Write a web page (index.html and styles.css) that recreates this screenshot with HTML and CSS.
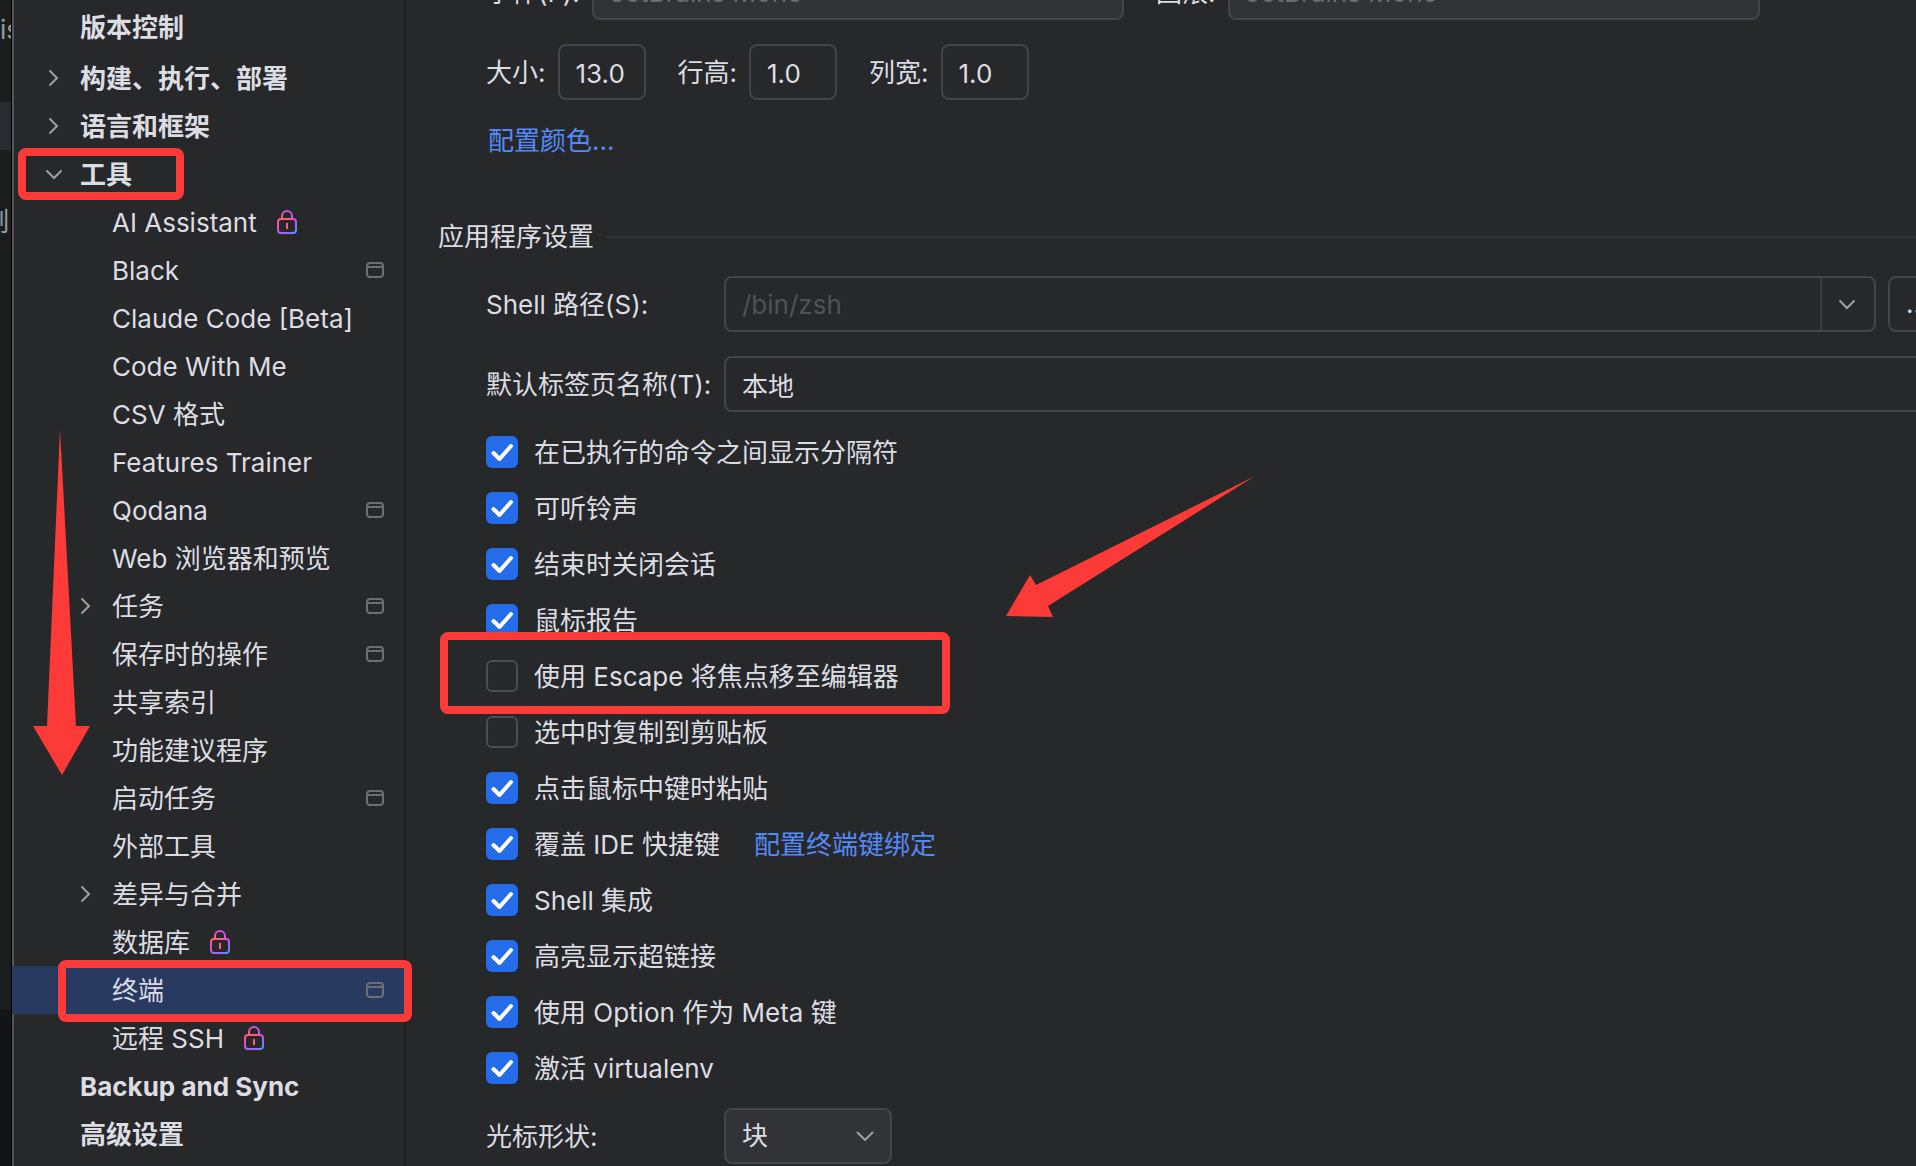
FILE: index.html
```html
<!DOCTYPE html>
<html lang="zh-CN">

	<head>
		<title>设置 - 终端</title>
		<meta charset="utf-8">
		<link rel="stylesheet" href="styles.css">
	</head>

	<body>
		<!-- icons -->
		<svg class="defs" width="0" height="0">
			<defs>
				<radialGradient id="lockFill" gradientUnits="userSpaceOnUse" cx="7" cy="11" r="15">
					<stop offset="0.3" stop-color="#ff5c7c"/>
					<stop offset="0.7" stop-color="#d74be8"/>
					<stop offset="1" stop-color="#5a8cff"/>
				</radialGradient>
			</defs>
			<symbol id="right" viewBox="0 0 24 24">
				<path d="M9.5 4.5L17 12L9.5 19.5" fill="none" stroke="#9da0a8" stroke-width="2"/>
			</symbol>
			<symbol id="down" viewBox="0 0 24 24">
				<path d="M6.5 8.5L14 16L21.5 8.5" fill="none" stroke="#9da0a8" stroke-width="2"/>
			</symbol>
			<symbol id="lock" viewBox="0 0 20 24">
				<path d="M5 9V6A5 5 0 0 1 15 6V9" fill="none" stroke="url(#lockFill)" stroke-width="2"/>
				<rect x="1" y="9" width="18" height="14" rx="3" fill="none" stroke="url(#lockFill)" stroke-width="2"/>
				<path d="M10 13V19" stroke="#ff5c7c" stroke-width="2"/>
			</symbol>
			<symbol id="project" viewBox="0 0 18 16">
				<rect x="1" y="1" width="16" height="14" rx="3" fill="none" stroke="#6c6e76" stroke-width="2"/>
				<path d="M1 5H17" stroke="#6c6e76" stroke-width="2"/>
			</symbol>
		</svg>

		<div class="editor">
			<div class="editorRow first">is</div>
			<div class="editorRow band"></div>
			<div class="editorRow">制</div>
			<div class="editorBottom"></div>
		</div>

		<nav class="sidebar">
			<a class="node top heading" href="#">版本控制</a>
			<a class="node top" href="#"><svg class="chevron"><use href="#right"/></svg>构建、执行、部署</a>
			<a class="node top" href="#"><svg class="chevron"><use href="#right"/></svg>语言和框架</a>
			<a class="node top" href="#"><svg class="chevron"><use href="#down"/></svg>工具</a>
			<a class="node" href="#">AI Assistant<svg class="lock"><use href="#lock"/></svg></a>
			<a class="node" href="#">Black<svg class="project"><use href="#project"/></svg></a>
			<a class="node" href="#">Claude Code [Beta]</a>
			<a class="node" href="#">Code With Me</a>
			<a class="node" href="#">CSV 格式</a>
			<a class="node" href="#">Features Trainer</a>
			<a class="node" href="#">Qodana<svg class="project"><use href="#project"/></svg></a>
			<a class="node" href="#">Web 浏览器和预览</a>
			<a class="node" href="#"><svg class="chevron"><use href="#right"/></svg>任务<svg class="project"><use href="#project"/></svg></a>
			<a class="node" href="#">保存时的操作<svg class="project"><use href="#project"/></svg></a>
			<a class="node" href="#">共享索引</a>
			<a class="node" href="#">功能建议程序</a>
			<a class="node" href="#">启动任务<svg class="project"><use href="#project"/></svg></a>
			<a class="node" href="#">外部工具</a>
			<a class="node" href="#"><svg class="chevron"><use href="#right"/></svg>差异与合并</a>
			<a class="node" href="#">数据库<svg class="lock"><use href="#lock"/></svg></a>
			<a class="node selected" href="#">终端<svg class="project"><use href="#project"/></svg></a>
			<a class="node" href="#">远程 SSH<svg class="lock"><use href="#lock"/></svg></a>
			<a class="node top" href="#">Backup and Sync</a>
			<a class="node top" href="#">高级设置</a>
		</nav>

		<main class="panel">
			<div class="content">
				<div class="row fonts">
					<label for="font">字体(F):</label>
					<select class="field combo font" id="font" disabled><option>JetBrains Mono</option></select>
					<label for="fallback">回滚:</label>
					<select class="field combo fallback" id="fallback" disabled><option>JetBrains Mono</option></select>
				</div>
				<div class="row sizes">
					<label for="size">大小:</label>
					<input class="field small" type="text" id="size" value="13.0">
					<label for="lineHeight">行高:</label>
					<input class="field small" type="text" id="lineHeight" value="1.0">
					<label for="columnWidth">列宽:</label>
					<input class="field small" type="text" id="columnWidth" value="1.0">
				</div>
				<div class="row colors"><a class="link" href="#">配置颜色...</a></div>

				<h2>应用程序设置</h2>

				<div class="row setting">
					<label class="name" for="shell">Shell 路径(S):</label>
					<div class="field path">
						<input type="text" id="shell" placeholder="/bin/zsh">
						<button type="button" class="drop" aria-label="历史"><svg class="chevron"><use href="#down"/></svg></button>
					</div>
					<button type="button" class="field browse">...</button>
				</div>
				<div class="row setting">
					<label class="name" for="tab">默认标签页名称(T):</label>
					<input class="field wide" type="text" id="tab" value="本地">
				</div>

				<div class="checks">
					<div class="check"><label><input type="checkbox" checked>在已执行的命令之间显示分隔符</label></div>
					<div class="check"><label><input type="checkbox" checked>可听铃声</label></div>
					<div class="check"><label><input type="checkbox" checked>结束时关闭会话</label></div>
					<div class="check"><label><input type="checkbox" checked>鼠标报告</label></div>
					<div class="check"><label><input type="checkbox">使用 Escape 将焦点移至编辑器</label></div>
					<div class="check"><label><input type="checkbox">选中时复制到剪贴板</label></div>
					<div class="check"><label><input type="checkbox" checked>点击鼠标中键时粘贴</label></div>
					<div class="check"><label><input type="checkbox" checked>覆盖 IDE 快捷键</label><a class="link" href="#">配置终端键绑定</a></div>
					<div class="check"><label><input type="checkbox" checked>Shell 集成</label></div>
					<div class="check"><label><input type="checkbox" checked>高亮显示超链接</label></div>
					<div class="check"><label><input type="checkbox" checked>使用 Option 作为 Meta 键</label></div>
					<div class="check"><label><input type="checkbox" checked>激活 virtualenv</label></div>
				</div>

				<div class="row setting">
					<label class="name" for="cursor">光标形状:</label>
					<select class="field combo cursor" id="cursor"><option>块</option></select>
				</div>
			</div>
		</main>

		<!-- marks drawn over the window -->
		<div class="mark markTools"></div>
		<div class="mark markTerminal"></div>
		<div class="mark markEscape"></div>
		<svg class="arrow arrowDown" width="60" height="350">
			<path d="M27 0L43 297H57L29 346L0 297H14Z" fill="#fc3a38"/>
		</svg>
		<svg class="arrow arrowLeft" width="250" height="142">
			<path d="M249 0L42 130L47 141L0 140L24 99L30 109Z" fill="#fc3a38"/>
		</svg>
	</body>
</html>
```

FILE: styles.css
```css
*{
  box-sizing: border-box;
}
body{
  margin: 0;
  height: 100vh;
  display: flex;
  position: relative;
  overflow: hidden;
  background-color: #27282a;
  color: #dcdde3;
  font: 26px/32px Inter, "Noto Sans CJK SC", sans-serif;
}
input, select, button{
  font: inherit;
  color: inherit;
}
a{
  color: inherit;
  text-decoration: none;
}
.defs{
  position: absolute;
}

/* editor behind the dialog */
.editor{
  width: 12px;
  flex: none;
  display: flex;
  flex-direction: column;
  background-color: #1b1d1d;
  border-right: 1px solid #000;
  color: #97989b;
  overflow: hidden;
}
.editorRow{
  height: 48px;
  flex: none;
  display: flex;
  align-items: center;
  justify-content: flex-end;
  margin-bottom: 48px;
  padding-right: 2px;
}
.editorRow.first{
  justify-content: flex-start;
  margin-top: 6px;
}
.editorRow.band{
  background-color: #2a2b30;
}
.editorBottom{
  flex: 1;
  margin-top: 716px;
  background-color: #131416;
}

/* settings tree */
.sidebar{
  width: 394px;
  flex: none;
  border-left: 2px solid #55565a;
  border-right: 2px solid #1e1f22;
}
.node{
  height: 48px;
  display: flex;
  align-items: center;
  padding: 2px 20px 0 98px;
  white-space: nowrap;
}
.node.top{
  padding-left: 66px;
  font-weight: 700;
}
.node.heading{
  height: 54px;
}
.node.selected{
  background-color: #293a60;
  margin-left: -2px;
  padding-left: 100px;
}
.node svg{
  margin-top: -2px;
}
.chevron{
  width: 24px;
  height: 24px;
  flex: none;
}
.node .chevron{
  margin-left: -40px;
  margin-right: 16px;
}
.lock{
  width: 20px;
  height: 24px;
  margin-left: 20px;
}
.project{
  width: 18px;
  height: 16px;
  margin-left: auto;
}

/* terminal page, scrolled down a little */
.panel{
  flex: 1;
  min-width: 0;
  overflow: hidden;
}
.content{
  margin: -36px -24px 0 0;
  padding-left: 80px;
}
.row{
  display: flex;
  align-items: center;
  white-space: nowrap;
}
.row label{
  padding-top: 2px;
}
.field{
  height: 56px;
  padding: 0 16px;
  border: 2px solid #43454c;
  border-radius: 8px;
  background-color: transparent;
  outline: none;
}
.combo{
  appearance: none;
  background: #323337 url("data:image/svg+xml,%3Csvg xmlns='http://www.w3.org/2000/svg' width='18' height='10'%3E%3Cpath d='M1 1L9 9L17 1' fill='none' stroke='%239da0a8' stroke-width='2'/%3E%3C/svg%3E") no-repeat right 16px center;
}
.combo:disabled{
  padding-top: 2px;
  background-image: none;
  color: #6b6c71;
  opacity: 1;
}
.fonts label:first-child{
  width: 106px;
}
.font{
  width: 532px;
  margin-right: 32px;
}
.fallback{
  width: 532px;
  margin-left: 12px;
}
.sizes{
  margin-top: 24px;
}
.small{
  width: 88px;
  margin: 0 32px 0 12px;
  padding: 2px 16px 0;
}
.colors{
  height: 82px;
  padding-left: 2px;
}
.link{
  color: #548af7;
}
h2{
  display: flex;
  align-items: center;
  gap: 12px;
  margin: 39px 0 23px -48px;
  font-size: 26px;
  font-weight: 400;
}
h2::after{
  content: "";
  flex: 1;
  height: 2px;
  background-color: #323337;
}
.setting{
  margin-bottom: 24px;
}
.name{
  width: 238px;
  flex: none;
}
.path{
  flex: 1;
  display: flex;
  padding: 0;
  margin-right: 12px;
}
.path input{
  flex: 1;
  min-width: 0;
  padding: 2px 16px 0;
  border: 0;
  background: none;
  outline: none;
}
.path input::placeholder{
  color: #515256;
}
.drop{
  width: 54px;
  padding: 0 16px 0 10px;
  border: 0;
  border-left: 2px solid #3a3b40;
  background: none;
  line-height: 0;
}
.browse{
  width: 52px;
}
.wide{
  flex: 1;
}
.checks{
  margin: -12px 0 12px;
}
.check{
  height: 56px;
  display: flex;
  align-items: center;
  gap: 34px;
  padding-top: 2px;
}
.check label{
  display: flex;
  align-items: center;
  gap: 16px;
}
.check input{
  appearance: none;
  width: 32px;
  height: 32px;
  margin: -2px 0 0;
  border: 2px solid #4c4d52;
  border-radius: 6px;
}
.check input:checked{
  border: 0;
  background: #246ce9 url("data:image/svg+xml,%3Csvg xmlns='http://www.w3.org/2000/svg' width='32' height='32'%3E%3Cpath d='M7.5 17L13.5 23L25 10' fill='none' stroke='white' stroke-width='4' stroke-linecap='round' stroke-linejoin='round'/%3E%3C/svg%3E");
}
.cursor{
  width: 168px;
}

/* marks */
.mark{
  position: absolute;
  border: 8px solid #fc3a38;
  border-radius: 8px;
}
.markTools{
  left: 18px;
  top: 148px;
  width: 166px;
  height: 52px;
}
.markTerminal{
  left: 58px;
  top: 960px;
  width: 354px;
  height: 62px;
}
.markEscape{
  left: 440px;
  top: 632px;
  width: 510px;
  height: 82px;
}
.arrow{
  position: absolute;
}
.arrowDown{
  left: 33px;
  top: 429px;
}
.arrowLeft{
  left: 1006px;
  top: 476px;
}
```
